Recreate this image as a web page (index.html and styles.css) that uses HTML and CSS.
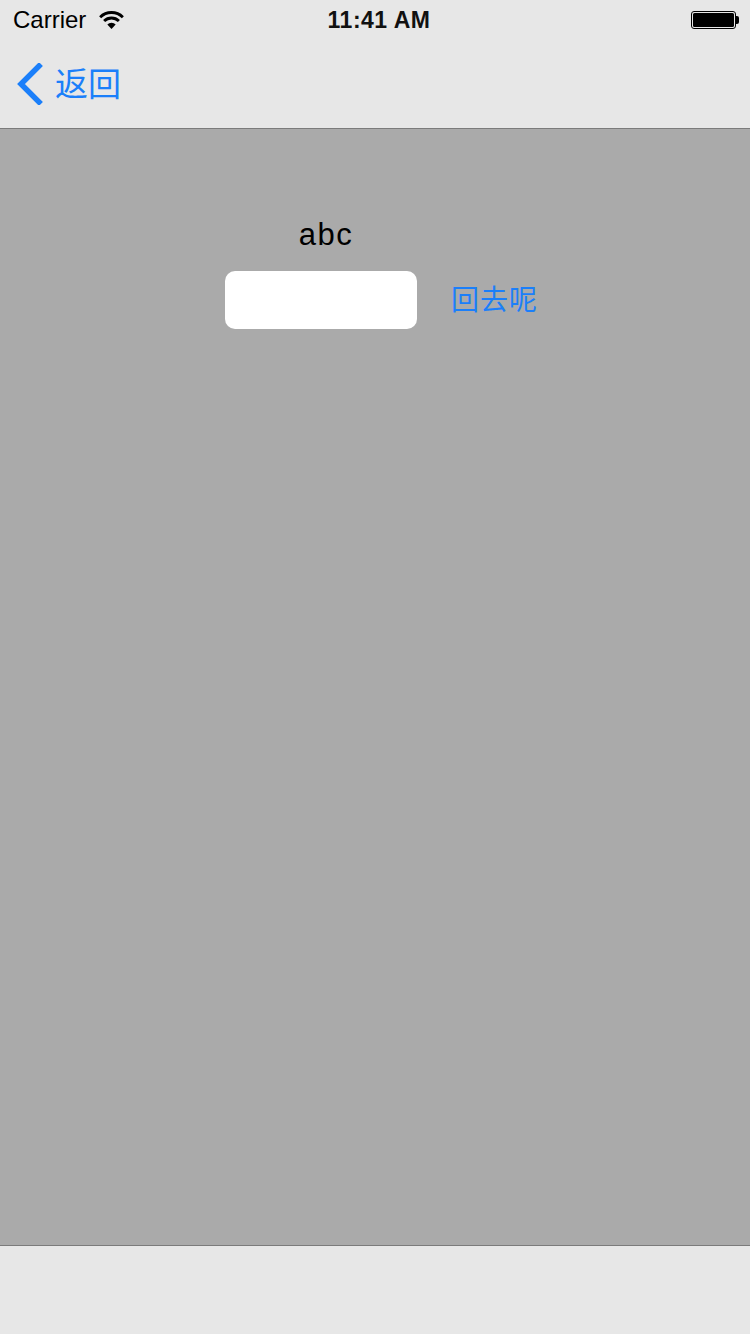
FILE: index.html
```html
<!DOCTYPE html>
<html lang="zh">
<head>
<meta charset="utf-8">
<title>Page</title>
<link rel="stylesheet" href="styles.css">
</head>
<body>
<div class="screen">
  <div class="status">
    <div class="status-left">
      <span class="carrier">Carrier</span>
      <svg class="wifi" width="25" height="18" viewBox="0 0 26 19">
        <path d="M1 6.5 A17 17 0 0 1 25 6.5" fill="none" stroke="#000" stroke-width="3"/>
        <path d="M5.2 10.6 A11 11 0 0 1 20.8 10.6" fill="none" stroke="#000" stroke-width="3"/>
        <path d="M13 19 L8.6 14.2 A6 6 0 0 1 17.4 14.2 Z" fill="#000"/>
      </svg>
    </div>
    <div class="time">11:41 AM</div>
    <div class="status-right">
      <div class="battery"><div class="battery-fill"></div></div>
      <div class="battery-tip"></div>
    </div>
  </div>
  <div class="nav">
    <div class="back">
      <svg class="chevron" width="28" height="42" viewBox="0 0 28 42">
        <path d="M24 3 L6 21 L24 39" fill="none" stroke="#1b7ffa" stroke-width="5.5" stroke-linecap="square" stroke-linejoin="miter"/>
      </svg>
      <span class="back-text">返回</span>
    </div>
  </div>
  <div class="main">
    <div class="label">abc</div>
    <div class="row">
      <div class="field"></div>
      <span class="link">回去呢</span>
    </div>
  </div>
  <div class="toolbar"></div>
</div>
</body>
</html>
```

FILE: styles.css
```css
html, body {
  margin: 0;
  padding: 0;
}
body {
  width: 750px;
  height: 1334px;
  overflow: hidden;
  font-family: "Liberation Sans", Arial, "Noto Sans CJK SC", sans-serif;
}
.screen {
  width: 750px;
  height: 1334px;
  display: flex;
  flex-direction: column;
  background: #aaaaaa;
}
.status {
  height: 40px;
  background: #e7e7e7;
  display: grid;
  grid-template-columns: 1fr auto 1fr;
  align-items: center;
  padding: 0 11px 0 13px;
}
.status-left {
  display: flex;
  align-items: center;
  gap: 13px;
}
.carrier {
  font-size: 24px;
  color: #000;
  line-height: 40px;
}
.wifi {
  margin-top: -1px;
}
.time {
  font-size: 23px;
  font-weight: bold;
  letter-spacing: 0.5px;
  line-height: 40px;
  color: #111;
  padding-left: 6px;
}
.status-right {
  display: flex;
  justify-content: flex-end;
  align-items: center;
}
.battery {
  width: 45px;
  height: 18px;
  box-sizing: border-box;
  border: 1.5px solid #000;
  border-radius: 3px;
  padding: 1px;
  background: #e7e7e7;
}
.battery-fill {
  width: 100%;
  height: 100%;
  background: #000;
  border-radius: 1.5px;
}
.battery-tip {
  width: 3px;
  height: 8px;
  background: #000;
  border-radius: 0 2px 2px 0;
}
.nav {
  height: 88px;
  background: #e7e7e7;
  border-bottom: 1px solid #7b7b7b;
  display: flex;
  align-items: center;
  padding-left: 15px;
}
.back {
  display: flex;
  align-items: center;
  gap: 12px;
  margin-top: -1px;
}
.back-text {
  font-family: "Noto Sans CJK SC", sans-serif;
  font-size: 33px;
  color: #1b7ffa;
  line-height: 40px;
  margin-top: -3px;
}
.main {
  flex: 1;
  background: #aaaaaa;
  padding-top: 88px;
}
.label {
  font-size: 31px;
  letter-spacing: 1.5px;
  line-height: 36px;
  color: #000;
  text-align: center;
  padding-right: 98px;
}
.row {
  display: flex;
  align-items: center;
  padding-left: 225px;
  margin-top: 18px;
}
.field {
  width: 192px;
  height: 58px;
  background: #fff;
  border-radius: 10px;
}
.link {
  margin-left: 34px;
  margin-top: -5px;
  font-family: "Noto Sans CJK SC", sans-serif;
  font-size: 28px;
  letter-spacing: 1px;
  color: #1b7ffa;
  line-height: 40px;
}
.toolbar {
  height: 88px;
  background: #e7e7e7;
  border-top: 1px solid #7b7b7b;
}
```
